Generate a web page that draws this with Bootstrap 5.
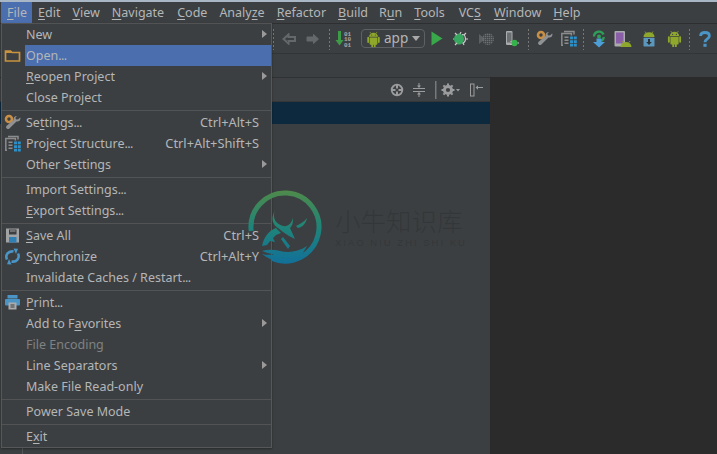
<!DOCTYPE html>
<html lang="en">
<head>
  <meta charset="UTF-8">
  <meta name="viewport" content="width=device-width, initial-scale=1.0">
  <title>Android Studio</title>
  <link href="https://cdn.jsdelivr.net/npm/bootstrap@5.3.0/dist/css/bootstrap.min.css" rel="stylesheet">
  <style>
    html, body { height: 100%; }
    body {
      background-color: #3c3f41;
      color: #b4b6b8;
      font-family: "Noto Sans", "Liberation Sans", sans-serif;
      font-size: 12.5px;
      line-height: 21px;
      overflow: hidden;
    }
    .ide { position: relative; width: 717px; height: 454px; overflow: hidden; }
    u { text-underline-offset: 2px; text-decoration-thickness: 1px; }

    .menu-bar { height: 24px; border-top: 2px solid #a9b6c6; border-bottom: 1px solid #2d2f30; padding-left: 1px; }
    .menu-top { padding: 0 6px; height: 21px; line-height: 21px; }
    .menu-top.on { background: #4b6eaf; padding: 0 5px 0 6px; }
    .menu-top.pr5 { padding-right: 5px; }
    .menu-top.pr7 { padding-right: 7px; }
    .menu-top.pr8 { padding-right: 8px; }

    .tool-bar { height: 30px; padding-left: 270px; border-bottom: 1px solid #323435; }
    .tb-btn { width: 24px; height: 29px; flex: none; }
    .tb-gap1 { margin-left: 1px; }
    .tb-gap2 { margin-left: 2px; }
    .tb-sep { width: 7px; height: 22px; flex: none; background: radial-gradient(circle, #777 0.6px, transparent 0.9px) center top / 7px 4px repeat-y; }
    .app-combo { width: 64px; height: 19px; flex: none; border: 1px solid #5e6163; border-radius: 4px; margin-left: 4px; font-size: 13.5px; line-height: 17px; padding-left: 4px; gap: 3px; }
    .combo-arrow { width: 0; height: 0; border-left: 4.5px solid transparent; border-right: 4.5px solid transparent; border-top: 5px solid #a9a9a9; margin-left: 1px; }

    .nav-strip { height: 24px; border-bottom: 1px solid #2f3132; }
    .work { height: 376px; }
    .side-panel { width: 490px; flex: none; }
    .panel-head { height: 24px; padding-right: 7px; gap: 4px; border-bottom: 1px solid #343638; background: #3e4143; }
    .hd-ico { flex: none; }
    .hd-gap { margin-left: 6px; }
    .picked-row { height: 22px; background: #0d293e; }
    .editor-pane { flex: 1; background: #2b2b2b; margin-top: -1px; }

    .file-menu {
      position: absolute; left: 1px; top: 23px; width: 271px; height: 425px;
      background: #3c3f41; border: 1px solid #555759; border-top-color: #515355;
      z-index: 3; box-shadow: 0 1px 2px rgba(0,0,0,.35);
    }
    .mi { height: 21px; padding-left: 24px; padding-right: 12px; position: relative; white-space: nowrap; }
    .mi.on { background: #4b6eaf; margin-left: 23px; padding-left: 1px; }
    .mi.off { color: #7f8284; }
    .mi .keys { margin-left: auto; font-size: 12.8px; }
    .mi .dots { letter-spacing: -0.6px; }
    .mi.sub::after { content: ""; position: absolute; right: 4px; top: 6px; border-left: 5px solid #9a9a9a; border-top: 4.5px solid transparent; border-bottom: 4.5px solid transparent; }
    .mi-ico { position: absolute; left: 2px; top: 2px; width: 17px; height: 17px; }
    .mi.on .mi-ico { left: -21px; }
    .mi-line { height: 1px; background: #515355; margin: 1.5px 0; }
    .gutter-tick { position: absolute; left: 22px; top: 448px; width: 1px; height: 6px; background: #555759; }

    .wm { position: absolute; left: 248px; top: 190px; z-index: 4; pointer-events: none; gap: 13px; }
    .wm-zh { font-family: "Noto Sans CJK SC", sans-serif; font-size: 25.5px; line-height: 27px; color: #34373a; font-weight: 300; margin-top: 16px; }
    .wm-en { font-size: 9.5px; line-height: 9px; color: #34373a; letter-spacing: 2px; font-family: "Liberation Sans", sans-serif; white-space: nowrap; margin-top: 5px; }
  </style>
</head>
<body>
  <svg width="0" height="0" class="position-absolute">
    <defs>
      <symbol id="droid" viewBox="0 0 16 18">
        <path fill="#8fa82c" d="M3 6.500a5 4.600 0 0 1 10 0zM1 7.500a1 1 0 0 1 2 0v5a1 1 0 0 1-2 0zM13 7.500a1 1 0 0 1 2 0v5a1 1 0 0 1-2 0zM3.600 7.400h8.800v7a1 1 0 0 1-1 1h-1v2a1 1 0 0 1-2 0v-2h-.8v2a1 1 0 0 1-2 0v-2h-1a1 1 0 0 1-1-1z"/>
        <path stroke="#8fa82c" stroke-width=".8" d="M5 2.800 4 1M11 2.800 12 1"/>
        <circle cx="6" cy="4.600" r=".6" fill="#3c3f41"/><circle cx="10" cy="4.600" r=".6" fill="#3c3f41"/>
      </symbol>
      <symbol id="wrench" viewBox="0 0 17 17">
        <circle cx="5" cy="5" r="3" fill="none" stroke="#c98f45" stroke-width="2.600"/>
        <path fill="#8f9193" d="M16.500 4.200c0 2.400-2 3.800-4 3.200L5.400 14.500a2 2 0 0 1-3-2.600L9.500 6c-.2-2.400 1.200-4 3.400-4l-1.600 2 1 1.400 2-.2 1.800-1.800z"/>
      </symbol>
      <symbol id="struct" viewBox="0 0 17 17">
        <path fill="none" stroke="#8a8c8e" stroke-width="1.500" d="M3 15.200H1.800V3.600h9.600v2M4 1.600h10v3"/>
        <path fill="#8a8c8e" d="M4.500 6.500h4V8h-4zM4.500 9.500h4V11h-4zM4.500 12.500h4V14h-4z"/>
        <path fill="#2d8fc7" d="M10 6.500h3v2.800h-3zM13.800 6.500h3v2.800h-3zM10 10.200h3V13h-3zM13.800 10.200h3V13h-3zM10 13.800h3v2.800h-3zM13.800 13.800h3v2.800h-3z"/>
      </symbol>
    </defs>
  </svg>

  <div class="ide">
    <div class="menu-bar d-flex align-items-start">
      <div class="menu-top on"><u>F</u>ile</div>
      <div class="menu-top"><u>E</u>dit</div>
      <div class="menu-top"><u>V</u>iew</div>
      <div class="menu-top pr7"><u>N</u>avigate</div>
      <div class="menu-top"><u>C</u>ode</div>
      <div class="menu-top">Analy<u>z</u>e</div>
      <div class="menu-top"><u>R</u>efactor</div>
      <div class="menu-top pr5"><u>B</u>uild</div>
      <div class="menu-top">R<u>u</u>n</div>
      <div class="menu-top pr8"><u>T</u>ools</div>
      <div class="menu-top pr7">VC<u>S</u></div>
      <div class="menu-top"><u>W</u>indow</div>
      <div class="menu-top"><u>H</u>elp</div>
    </div>

    <div class="tool-bar d-flex align-items-center">
      <div class="tb-sep"></div>
      <div class="tb-btn d-flex align-items-center justify-content-center">
        <svg width="14" height="12" viewBox="0 0 14 12"><path fill="none" stroke="#65686a" stroke-width="2" d="M6.500 1.500 1.500 6l5 4.500V8H13V4H6.500z"/></svg>
      </div>
      <div class="tb-btn d-flex align-items-center justify-content-center">
        <svg width="14" height="12" viewBox="0 0 14 12"><path fill="#65686a" stroke="#65686a" d="M7.500 1.500 12.500 6l-5 4.500V8H1V4h6.500z"/></svg>
      </div>
      <div class="tb-sep tb-gap1"></div>
      <div class="tb-btn d-flex align-items-center justify-content-center">
        <svg width="20" height="18" viewBox="0 0 20 18">
          <path fill="#3d9a46" d="M3 1h3v9h2.500L4.500 15.500.5 10H3z"/>
          <text x="9" y="5.800" font-size="6" font-family="Liberation Mono, monospace" font-weight="700" fill="#a9a9a9">01</text>
          <text x="9" y="11.300" font-size="6" font-family="Liberation Mono, monospace" font-weight="700" fill="#a9a9a9">10</text>
          <text x="9" y="16.800" font-size="6" font-family="Liberation Mono, monospace" font-weight="700" fill="#a9a9a9">01</text>
        </svg>
      </div>
      <div class="app-combo d-flex align-items-center">
        <svg width="15" height="16"><use href="#droid"/></svg>
        <span>app</span>
        <span class="combo-arrow"></span>
      </div>
      <div class="tb-btn d-flex align-items-center justify-content-center">
        <svg width="12" height="15" viewBox="0 0 12 15"><path fill="#38a84a" d="M.5.500 11.500 7.500.5 14.500z"/></svg>
      </div>
      <div class="tb-btn d-flex align-items-center justify-content-center">
        <svg width="16" height="15" viewBox="0 0 16 15">
          <ellipse cx="6" cy="8" rx="5" ry="5.500" fill="#38a860"/>
          <path fill="none" stroke="#c9c9c9" stroke-width="1.200" d="M9 3.500c4 0 5 7 .5 9M2 2l2 2M8 1 7 3M0 8h1M12 8h3M2 14l2-2M11 14l-1-2M13 2l-2 2"/>
        </svg>
      </div>
      <div class="tb-btn tb-gap1 d-flex align-items-center justify-content-center">
        <svg width="15" height="14" viewBox="0 0 15 14">
          <defs><pattern id="chk" width="2" height="2" patternUnits="userSpaceOnUse"><rect width="1.400" height="1.400" fill="#6c6f71"/></pattern></defs>
          <path fill="#5d6062" d="M0 2l6 5-6 5z"/><circle cx="9" cy="7" r="6" fill="url(#chk)"/>
        </svg>
      </div>
      <div class="tb-btn tb-gap2 d-flex align-items-center justify-content-center">
        <svg width="14" height="18" viewBox="0 0 14 18">
          <rect x="1" y="1" width="6.500" height="14" rx="1" fill="#a9abad"/><rect x="2" y="2.500" width="4.500" height="10" fill="#6d7072"/>
          <ellipse cx="9.500" cy="13" rx="3" ry="3.200" fill="#35b24a"/>
          <path stroke="#d0d0d0" d="M5.500 11.500h1M5.500 14.500h1M12.500 13h1.500"/>
        </svg>
      </div>
      <div class="tb-sep tb-gap1"></div>
      <div class="tb-btn d-flex align-items-center justify-content-center"><svg width="17" height="17"><use href="#wrench"/></svg></div>
      <div class="tb-btn d-flex align-items-center justify-content-center"><svg width="17" height="17"><use href="#struct"/></svg></div>
      <div class="tb-sep"></div>
      <div class="tb-btn d-flex align-items-center justify-content-center">
        <svg width="16" height="19" viewBox="0 0 16 19">
          <path fill="none" stroke="#2f9c5a" stroke-width="2.400" d="M3 7.500a5 5 0 0 1 9.500-2M12.800 8a5 5 0 0 1-2.500 4"/>
          <circle cx="8" cy="7.500" r="2" fill="#2f9c5a"/>
          <path fill="#4c9fd6" d="M5.500 9.500h5V13H14l-6 5.500L2 13h3.500z"/>
        </svg>
      </div>
      <div class="tb-btn d-flex align-items-center justify-content-center">
        <svg width="18" height="18" viewBox="0 0 18 18">
          <rect x="0.500" y="1" width="10.500" height="15.500" rx="1" fill="#a9abad"/><rect x="2" y="2.500" width="7.500" height="11" fill="#8a5fa8"/>
          <path fill="#8fa82c" d="M6.500 17a5.500 5 0 0 1 11 0z"/>
          <path stroke="#8fa82c" stroke-width=".8" d="M9 12.500 8 11M15 12.500l1-1.500"/>
        </svg>
      </div>
      <div class="tb-btn tb-gap2 d-flex align-items-center justify-content-center">
        <svg width="16" height="16" viewBox="0 0 16 16">
          <path fill="#8fa82c" d="M2.500 6a5.500 4.800 0 0 1 11 0z"/>
          <path stroke="#8fa82c" stroke-width=".8" d="M5 2 4 .5M11 2l1-1.500"/>
          <rect x="2.500" y="6.800" width="11" height="8.700" rx=".8" fill="#5b96bd"/>
          <path fill="#2c3133" d="M7 8h2v3h1.800L8 14l-2.800-3H7z"/>
        </svg>
      </div>
      <div class="tb-btn tb-gap1 d-flex align-items-center justify-content-center"><svg width="15" height="17"><use href="#droid"/></svg></div>
      <div class="tb-sep"></div>
      <div class="tb-btn d-flex align-items-center justify-content-center">
        <svg width="12" height="16" viewBox="0 0 12 16"><path fill="none" stroke="#4a94c6" stroke-width="2.800" d="M1.600 5C1.600 2.800 3.500 1.500 6 1.500s4.400 1.300 4.400 3.500c0 3-4.400 3-4.400 6.300"/><rect x="4.400" y="12.800" width="3.200" height="3" fill="#4a94c6"/></svg>
      </div>
    </div>

    <div class="nav-strip"></div>

    <div class="work d-flex">
      <div class="side-panel">
        <div class="panel-head d-flex align-items-center justify-content-end">
          <svg class="hd-ico" width="14" height="14" viewBox="0 0 14 14"><circle cx="7" cy="7" r="5.300" fill="none" stroke="#9a9c9e" stroke-width="1.800"/><path stroke="#9a9c9e" stroke-width="2" d="M7 2v3.500M7 8.500V12M2 7h3.500M8.500 7H12"/></svg>
          <svg class="hd-ico ms-1" width="14" height="14" viewBox="0 0 14 14"><path stroke="#9a9c9e" fill="none" d="M1 5.500h12M1 8.500h12M7 0v3.500M7 14v-3.500"/><path fill="#9a9c9e" d="M5 2.500h4L7 5zM5 11.500h4L7 9z"/></svg>
          <svg class="hd-ico ms-1" width="3" height="18" viewBox="0 0 3 18"><rect x="1" width="1.500" height="18" fill="#77797b"/></svg>
          <svg class="hd-ico" width="19" height="14" viewBox="0 0 19 14"><circle cx="7" cy="7" r="3.600" fill="none" stroke="#9a9c9e" stroke-width="3"/><path stroke="#9a9c9e" stroke-width="2" stroke-dasharray="2 1" d="M7 .5v2M7 11.500v2M.5 7h2M11.500 7h2M2.400 2.400l1.400 1.400M10.200 10.200l1.400 1.400M11.600 2.400l-1.400 1.400M3.800 10.200l-1.400 1.400"/><path fill="#9a9c9e" d="M15 6h4l-2 2.500z"/></svg>
          <svg class="hd-ico hd-gap" width="13" height="14" viewBox="0 0 13 14"><rect x=".5" y="1" width="3.500" height="12" fill="none" stroke="#9a9c9e"/><path stroke="#9a9c9e" d="M6 4.500h7"/><path fill="#9a9c9e" d="M5.500 4.500 8 2.300v4.400z"/></svg>
        </div>
        <div class="picked-row"></div>
      </div>
      <div class="editor-pane"></div>
    </div>

    <div class="file-menu">
      <div class="mi sub">New</div>
      <div class="mi on">
        <svg class="mi-ico" viewBox="0 0 17 17"><path fill="none" stroke="#c8923f" stroke-width="1.700" d="M1.500 14V4h5l1.500 1.500h7.500V14z"/><path fill="#c8923f" d="M1 4h6l1 2H1z"/></svg>
        Open<span class="dots">...</span>
      </div>
      <div class="mi sub"><u>R</u>eopen Project</div>
      <div class="mi">Close Project</div>
      <div class="mi-line"></div>
      <div class="mi d-flex">
        <svg class="mi-ico"><use href="#wrench"/></svg>
        <span>Se<u>t</u>tings<span class="dots">...</span></span><span class="keys">Ctrl+Alt+S</span>
      </div>
      <div class="mi d-flex">
        <svg class="mi-ico"><use href="#struct"/></svg>
        <span>Project Structure<span class="dots">...</span></span><span class="keys">Ctrl+Alt+Shift+S</span>
      </div>
      <div class="mi sub">Other Settings</div>
      <div class="mi-line"></div>
      <div class="mi">Import Settings<span class="dots">...</span></div>
      <div class="mi"><u>E</u>xport Settings<span class="dots">...</span></div>
      <div class="mi-line"></div>
      <div class="mi d-flex">
        <svg class="mi-ico" viewBox="0 0 17 17"><path fill="#a0a2a4" d="M2 1.500h13v14H2z"/><rect x="5" y="2.500" width="7.500" height="5" fill="#3c3f41"/><rect x="6" y="3.500" width="5.500" height="1" fill="#a0a2a4"/><rect x="5" y="10" width="7.500" height="5.500" fill="#2f7fb5"/></svg>
        <span><u>S</u>ave All</span><span class="keys">Ctrl+S</span>
      </div>
      <div class="mi d-flex">
        <svg class="mi-ico" viewBox="0 0 17 17"><path fill="none" stroke="#4a94c6" stroke-width="2.600" d="M3 11.500C.8 7 4.500 2.500 9.500 3.500M14 5.500c2.200 4.500-1.500 9-6.500 8"/><path fill="#4a94c6" d="M9.500.5 14 .8l-2 5.200zM7.500 16.500 3 16.200 5 11z"/></svg>
        <span>S<u>y</u>nchronize</span><span class="keys">Ctrl+Alt+Y</span>
      </div>
      <div class="mi">Invalidate Caches / Restart<span class="dots">...</span></div>
      <div class="mi-line"></div>
      <div class="mi">
        <svg class="mi-ico" viewBox="0 0 17 17"><rect x="3.500" y="1" width="10" height="3.500" fill="#4a94c6"/><rect x="1" y="5" width="15" height="6.500" rx="1" fill="#4a94c6"/><rect x="4.500" y="8.500" width="8" height="7" fill="#a9abad"/><path stroke="#3c3f41" d="M6.500 11h4M6.500 13h4"/></svg>
        <u>P</u>rint<span class="dots">...</span>
      </div>
      <div class="mi sub">Add to F<u>a</u>vorites</div>
      <div class="mi off">File Encoding</div>
      <div class="mi sub">Line Separators</div>
      <div class="mi">Make File Read-only</div>
      <div class="mi-line"></div>
      <div class="mi">Power Save Mode</div>
      <div class="mi-line"></div>
      <div class="mi">E<u>x</u>it</div>
    </div>
    <div class="gutter-tick"></div>

    <div class="wm d-flex align-items-start">
      <svg width="74" height="74" viewBox="0 0 74 74">
        <defs><linearGradient id="ring" gradientUnits="userSpaceOnUse" x1="0" y1="0" x2="0" y2="74"><stop offset="0" stop-color="#4f8a4a"/><stop offset=".5" stop-color="#1f8478"/><stop offset="1" stop-color="#12709a"/></linearGradient></defs>
        <path fill="none" stroke="url(#ring)" stroke-width="5" d="M3.200 41A34 34 0 1 1 24 68.500"/>
        <path fill="url(#ring)" d="M14 61c6-2 12-1.500 18 0 9 2 18 1 27-5l-6 10c-7 6-15 7.500-22 6-6-1.500-12-4-17-8 3 1 8 1 12 .5-3-1-8-1.500-12-3.500z"/>
        <path fill="url(#ring)" d="M26.700 21C24 28 28 34 35 36c5 1 9-3 9.700-8.300.8 5.300-.7 8.300-2.700 10.300l5 11-6-3-6-4-5-4C24 34 23 28 26.700 21z"/>
        <path fill="url(#ring)" d="M59 28c-3 4-7 6-11 8l2 2c5-1 8-5 9-10z"/>
        <path fill="url(#ring)" d="M14 56c2-10 8-16 14-18l5 5-5 2-3 3 2 4-5-1-3 4zM35 47l7 9-2 3-7-10z"/>
      </svg>
      <div>
        <div class="wm-zh">小牛知识库</div>
        <div class="wm-en">XIAO NIU ZHI SHI KU</div>
      </div>
    </div>
  </div>

  <script src="https://cdn.jsdelivr.net/npm/bootstrap@5.3.0/dist/js/bootstrap.bundle.min.js"></script>
</body>
</html>
